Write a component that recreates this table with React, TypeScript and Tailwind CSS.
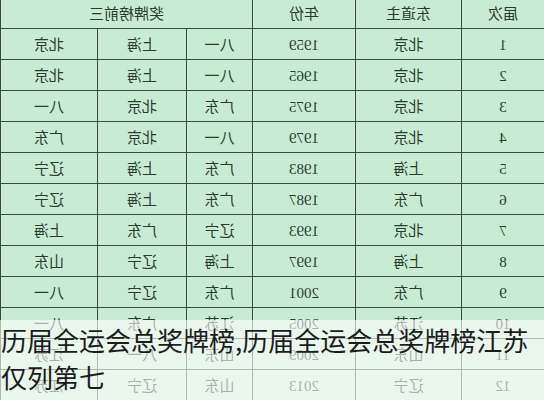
const rows = [
  ['1', '北京', '1959', '八一', '上海', '北京'],
  ['2', '北京', '1965', '八一', '上海', '北京'],
  ['3', '北京', '1975', '广东', '北京', '八一'],
  ['4', '北京', '1979', '八一', '北京', '广东'],
  ['5', '上海', '1983', '广东', '上海', '辽宁'],
  ['6', '广东', '1987', '广东', '上海', '辽宁'],
  ['7', '北京', '1993', '辽宁', '广东', '上海'],
  ['8', '上海', '1997', '上海', '辽宁', '山东'],
  ['9', '广东', '2001', '广东', '辽宁', '八一'],
  ['10', '江苏', '2005', '江苏', '广东', '八一'],
  ['11', '山东', '2009', '山东', '八一', '江苏'],
  ['12', '辽宁', '2013', '山东', '辽宁', '江苏'],
]

const cell = 'flex items-center justify-center border-r border-b border-[#3e4a41] pt-[3px]'

export default function App() {
  return (
    <div className="relative w-[544px] h-[400px] overflow-hidden bg-[#c7ecd3]">
      {/* the source picture is mirrored, so the table is flipped */}
      <div
        className="-scale-x-100 -mt-[2px] grid grid-cols-[83px_106px_103px_66px_89px_97px] auto-rows-[31px] text-[15px] text-[#2c3a30]"
        style={{ fontFamily: '"Liberation Serif", "Noto Sans CJK SC", serif' }}
      >
        <div className={cell}>届次</div>
        <div className={cell}>东道主</div>
        <div className={cell}>年份</div>
        <div className={`${cell} col-span-3`}>奖牌榜前三</div>
        {rows.map((r) =>
          r.map((v, i) => (
            <div key={r[0] + '-' + i} className={cell}>
              {v}
            </div>
          ))
        )}
      </div>

      <div
        className="absolute left-0 right-0 top-[320px] bottom-0 bg-white/60 pl-[1px] pt-[1px] text-[26px] leading-[37px] text-[#1c1c1c]"
        style={{ fontFamily: '"Noto Sans CJK SC", sans-serif' }}
      >
        历届全运会总奖牌榜,历届全运会总奖牌榜江苏仅列第七
      </div>
    </div>
  )
}
